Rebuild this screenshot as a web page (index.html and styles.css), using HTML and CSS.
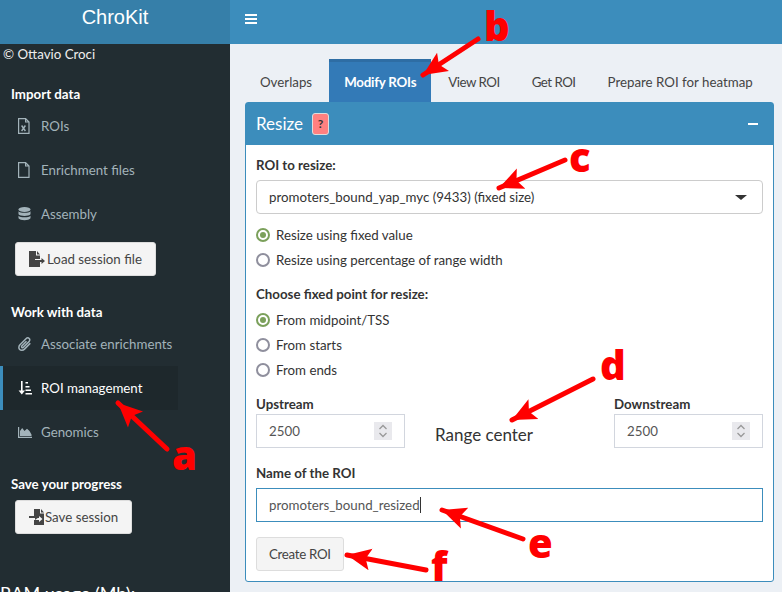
FILE: index.html
```html
<!DOCTYPE html>
<html>
<head>
    <link rel="stylesheet" href="styles.css">
</head>
<body>
    <div class="page">
        <div class="sidebar">
            <div class="logo">ChroKit</div>
            <div class="copyright">© Ottavio Croci</div>
            <div class="side-title first">Import data</div>
            <div class="side-item">
                <svg class="side-icon" viewBox="0 0 14 16" preserveAspectRatio="xMinYMid"><path d="M.6.6h7l3.400 3.400v11.400h-10.400z M7.600.6v3.400h3.400" fill="none" stroke="currentColor" stroke-width="1.200"/><path d="M3.600 7.500l3.800 5.500M7.400 7.500l-3.800 5.500" stroke="currentColor" stroke-width="1.400"/></svg>
                <span>ROIs</span>
            </div>
            <div class="side-item">
                <svg class="side-icon" viewBox="0 0 14 16" preserveAspectRatio="xMinYMid"><path d="M.6.6h7l3.400 3.400v11.400h-10.400z M7.600.6v3.400h3.400" fill="none" stroke="currentColor" stroke-width="1.200"/></svg>
                <span>Enrichment files</span>
            </div>
            <div class="side-item">
                <svg class="side-icon" viewBox="0 0 14 16" preserveAspectRatio="xMinYMid"><ellipse cx="6.500" cy="3.500" rx="6" ry="2.500" fill="currentColor"/><path d="M.5 5.300c1.500 2 10.500 2 12 0v3c-1.500 2.200-10.500 2.200-12 0zM.5 9.800c1.500 2 10.500 2 12 0v2.500c-1.500 2.600-10.500 2.600-12 0z" fill="currentColor"/></svg>
                <span>Assembly</span>
            </div>
            <div class="side-btn load">
                <svg class="btn-icon" viewBox="0 0 16 16"><path d="M0 0h7v4.500h4v3.500h-5v2h5v6h-11zM8 0l3 3.500h-3z" fill="#444"/><path d="M6 9h6.500v-2l3.500 3-3.500 3v-2h-6.500z" fill="#444"/></svg>
                <span>Load session file</span>
            </div>
            <div class="side-title work">Work with data</div>
            <div class="side-item">
                <svg class="side-icon" viewBox="0 0 14 16" preserveAspectRatio="xMinYMid"><path d="M12.300 7.200l-5.800 5.900c-1.500 1.500-3.700 1.500-4.800.3-1.200-1.200-1.100-3.200.3-4.600l6-6.100c1-1 2.400-1 3.200-.2.800.8.800 2.100-.2 3.100l-5.600 5.700c-.5.500-1.200.5-1.600.1-.4-.4-.3-1.100.2-1.600l4.500-4.600" fill="none" stroke="currentColor" stroke-width="1.500"/></svg>
                <span>Associate enrichments</span>
            </div>
            <div class="side-item active">
                <svg class="side-icon" viewBox="0 0 14 16" preserveAspectRatio="xMinYMid"><path d="M3 1h1.600v9.500h2.400l-3.200 4-3.200-4h2.400z" fill="currentColor"/><path d="M7.500 2h2.500v1.600h-2.500zM7.500 6h4v1.600h-4zM7.500 9.500h5.500v1.600h-5.500zM7.500 13h6.500v1.600h-6.500z" fill="currentColor"/></svg>
                <span>ROI management</span>
            </div>
            <div class="side-item">
                <svg class="side-icon" viewBox="0 0 14 16" preserveAspectRatio="xMinYMid"><path d="M0 3h1.200v9.800h12.800v1.200h-14z" fill="currentColor"/><path d="M2 12v-5l2.200-3 2.300 3 2.500-2.200 2.500 2.200 2 3.500v1.500z" fill="currentColor"/></svg>
                <span>Genomics</span>
            </div>
            <div class="side-title save">Save your progress</div>
            <div class="side-btn saving">
                <svg class="btn-icon" viewBox="0 0 16 16"><path d="M5 0h6v4.500h4v11.500h-10v-5h5v2l3.500-3-3.500-3v2h-5zM12 0l3 3.500h-3z" fill="#444"/><path d="M0 7h7v2h-7z" fill="#444"/><path d="M6 5l4 3-4 3z" fill="#444"/></svg>
                <span>Save session</span>
            </div>
            <div class="ram">RAM usage (Mb):</div>
        </div>

        <div class="main">
            <div class="topbar">
                <div class="burger"><i></i><i></i><i></i></div>
            </div>
            <div class="content">
                <div class="tabs">
                    <div class="tab">Overlaps</div>
                    <div class="tab active">Modify ROIs</div>
                    <div class="tab tight">View ROI</div>
                    <div class="tab tight">Get ROI</div>
                    <div class="tab">Prepare ROI for heatmap</div>
                </div>
                <div class="box">
                    <div class="box-header">
                        <span class="box-title">Resize</span>
                        <span class="help">?</span>
                        <span class="minus"></span>
                    </div>
                    <div class="box-body">
                        <div class="label">ROI to resize:</div>
                        <div class="select">
                            <span>promoters_bound_yap_myc (9433) (fixed size)</span>
                            <i class="caret"></i>
                        </div>
                        <div class="radios">
                            <div class="radio"><i class="dot on"></i>Resize using fixed value</div>
                            <div class="radio"><i class="dot"></i>Resize using percentage of range width</div>
                        </div>
                        <div class="label">Choose fixed point for resize:</div>
                        <div class="radios">
                            <div class="radio"><i class="dot on"></i>From midpoint/TSS</div>
                            <div class="radio"><i class="dot"></i>From starts</div>
                            <div class="radio"><i class="dot"></i>From ends</div>
                        </div>
                        <div class="numbers">
                            <div>
                                <div class="label">Upstream</div>
                                <div class="number">2500
                                    <span class="spin"><svg viewBox="0 0 10 14"><path d="M1.500 5l3.500-3.500 3.500 3.500M1.500 9l3.500 3.500 3.500-3.500" fill="none" stroke="#999" stroke-width="1.300"/></svg></span>
                                </div>
                            </div>
                            <div class="center-text">Range center</div>
                            <div>
                                <div class="label">Downstream</div>
                                <div class="number">2500
                                    <span class="spin"><svg viewBox="0 0 10 14"><path d="M1.500 5l3.500-3.500 3.500 3.500M1.500 9l3.500 3.500 3.500-3.500" fill="none" stroke="#999" stroke-width="1.300"/></svg></span>
                                </div>
                            </div>
                        </div>
                        <div class="label">Name of the ROI</div>
                        <div class="name-input">promoters_bound_resized<i class="cursor"></i></div>
                        <div class="create">Create ROI</div>
                    </div>
                </div>
            </div>
        </div>
    </div>

    <!-- hand drawn notes on top of the screenshot -->
    <svg class="notes" viewBox="0 0 782 592">
        <defs>
            <marker id="head" markerUnits="userSpaceOnUse" markerWidth="26" markerHeight="24" refX="24" refY="12" orient="auto">
                <path d="M0 1l24 11-24 11 5-11z" fill="#f00"/>
            </marker>
        </defs>
        <g stroke="#f00" stroke-width="5" stroke-linecap="round">
            <line x1="167" y1="449" x2="118" y2="403" marker-end="url(#head)"/>
            <line x1="478" y1="39" x2="423" y2="75" marker-end="url(#head)"/>
            <line x1="565" y1="160" x2="499" y2="188" marker-end="url(#head)"/>
            <line x1="593" y1="379" x2="512" y2="420" marker-end="url(#head)"/>
            <line x1="523" y1="539" x2="442" y2="510" marker-end="url(#head)"/>
            <line x1="426" y1="570" x2="347" y2="555" marker-end="url(#head)"/>
        </g>
        <g class="note-letters">
            <text x="172" y="470">a</text>
            <text x="484" y="41">b</text>
            <text x="569" y="172">c</text>
            <text x="600" y="380">d</text>
            <text x="528" y="558">e</text>
            <text x="431" y="581">f</text>
        </g>
    </svg>
</body>
</html>
```

FILE: styles.css
```css
html, body {
    margin: 0;
    height: 100%;
    overflow: hidden;
}
body {
    font-family: Lato, "Noto Sans", sans-serif;
    font-size: 13.3px;
    color: #333;
    position: relative;
}
.page {
    display: flex;
    height: 592px;
    overflow: hidden;
}

/* sidebar */
.sidebar {
    width: 230px;
    flex: none;
    background-color: #222d32;
    color: #fff;
    display: flex;
    flex-direction: column;
    align-items: flex-start;
}
.sidebar > div {
    flex: none;
}
.logo {
    align-self: stretch;
    height: 44px;
    background-color: #367fa9;
    font-family: "Liberation Sans", sans-serif;
    font-size: 20px;
    line-height: 35px;
    text-align: center;
}
.copyright {
    margin-top: 2px;
    padding-left: 3px;
    line-height: 17px;
    color: #eee;
}
.side-title {
    padding-left: 11px;
    font-weight: bold;
    line-height: 18px;
    margin-bottom: 1px;
}
.side-title.first { margin-top: 22px; }
.side-title.work { margin-top: 27px; }
.side-title.save { margin-top: 21px; }
.side-item {
    width: 178px;
    height: 44px;
    box-sizing: border-box;
    display: flex;
    align-items: center;
    color: #a3b3ba;
    padding-left: 18px;
    white-space: nowrap;
}
.side-item span { margin-left: 9px; }
.side-icon {
    width: 14px;
    height: 16px;
    flex: none;
}
.side-item.active {
    background-color: #1e282c;
    color: #fff;
    border-left: 3px solid #3c8dbc;
    padding-left: 15px;
}
.side-btn {
    margin: 6px 0 0 15px;
    height: 34px;
    box-sizing: border-box;
    padding: 0 13px;
    display: flex;
    align-items: center;
    gap: 2px;
    background-color: #f4f4f4;
    border: 1px solid #ddd;
    border-radius: 3px;
    color: #444;
}
.side-btn.saving { gap: 0; }
.btn-icon {
    width: 16px;
    height: 16px;
    flex: none;
}
.ram {
    margin: 49px 0 0 0;
    font-size: 18px;
    line-height: 20px;
    white-space: nowrap;
}

/* main part */
.main {
    flex: 1;
    background-color: #ecf0f5;
    min-width: 0;
}
.topbar {
    height: 44px;
    background-color: #3c8dbc;
    display: flex;
    align-items: center;
    padding-left: 15px;
}
.burger {
    width: 12px;
    display: flex;
    flex-direction: column;
    gap: 2px;
    margin-bottom: 6px;
}
.burger i {
    display: block;
    height: 2px;
    background-color: #fff;
}
.content {
    padding: 15px 8px 0 15px;
}
.tabs {
    display: flex;
    gap: 2px;
    height: 43px;
}
.tab {
    padding: 3px 15px 0;
    line-height: 40px;
    color: #444;
    white-space: nowrap;
}
.tab.tight { letter-spacing: -0.5px; }
.tab.active {
    background-color: #337ab7;
    border-top: 3px solid #2e6da4;
    padding-top: 0;
    color: #fff;
    font-weight: bold;
    letter-spacing: -0.2px;
}

.box {
    height: 480px;
    box-sizing: border-box;
    background-color: #fff;
    border: 1px solid #3c8dbc;
    border-radius: 3px;
}
.box-header {
    height: 42px;
    background-color: #3c8dbc;
    color: #fff;
    display: flex;
    align-items: center;
    padding-left: 10px;
}
.box-title {
    font-size: 17px;
    padding-bottom: 2px;
}
.help {
    margin-left: 9px;
    width: 17px;
    height: 22px;
    box-sizing: border-box;
    text-align: center;
    line-height: 20px;
    font-size: 12px;
    font-weight: bold;
    color: #333;
    background-color: #ff8080;
    border: 1px solid #ddd;
    border-radius: 3px;
}
.minus {
    margin-left: auto;
    margin-right: 15px;
    width: 10px;
    height: 2px;
    background-color: #fff;
}
.box-body {
    padding: 10px 10px 0;
}
.label {
    font-weight: bold;
    line-height: 20px;
    margin-bottom: 3px;
}
.select {
    height: 34px;
    box-sizing: border-box;
    margin: 5px 0 8px;
    border: 1px solid #ccc;
    border-radius: 4px;
    display: flex;
    align-items: center;
    justify-content: space-between;
    padding: 0 15px 0 12px;
}
.caret {
    border-top: 5px solid #333;
    border-left: 6px solid transparent;
    border-right: 6px solid transparent;
}
.radios {
    margin-bottom: 12px;
}
.radio {
    height: 25px;
    display: flex;
    align-items: center;
}
.dot {
    width: 14px;
    height: 14px;
    box-sizing: border-box;
    border: 2px solid #8f8f9d;
    border-radius: 50%;
    margin-right: 6px;
    background-clip: content-box;
}
.dot.on {
    border-color: #7ba05b;
    background-color: #7ba05b;
    padding: 2px;
}
.numbers {
    display: grid;
    grid-template-columns: 149px 1fr 149px;
}
.numbers .label { margin-bottom: 0; }
.number {
    height: 34px;
    box-sizing: border-box;
    border: 1px solid #d2d6de;
    padding: 0 12px;
    display: flex;
    align-items: center;
    justify-content: space-between;
    color: #555;
}
.spin {
    width: 18px;
    height: 18px;
    background-color: #e9e9ed;
    display: flex;
    align-items: center;
    justify-content: center;
}
.spin svg {
    width: 10px;
    height: 14px;
}
.center-text {
    font-size: 17px;
    padding: 30px 0 0 30px;
}
.numbers + .label {
    margin-top: 15px;
    margin-bottom: 5px;
}
.name-input {
    height: 34px;
    box-sizing: border-box;
    border: 1px solid #3c8dbc;
    padding: 0 12px;
    display: flex;
    align-items: center;
    color: #555;
}
.cursor {
    width: 1px;
    height: 16px;
    background-color: #333;
}
.create {
    display: inline-block;
    margin-top: 15px;
    height: 34px;
    box-sizing: border-box;
    padding: 0 12px;
    line-height: 32px;
    letter-spacing: -0.3px;
    background-color: #f4f4f4;
    border: 1px solid #ddd;
    border-radius: 3px;
    color: #444;
}

/* annotation layer */
.notes {
    position: absolute;
    left: 0;
    top: 0;
    width: 782px;
    height: 592px;
    pointer-events: none;
}
.note-letters text {
    font-family: "Open Sans", sans-serif;
    font-weight: 800;
    font-size: 40px;
    fill: #f00;
}
```
